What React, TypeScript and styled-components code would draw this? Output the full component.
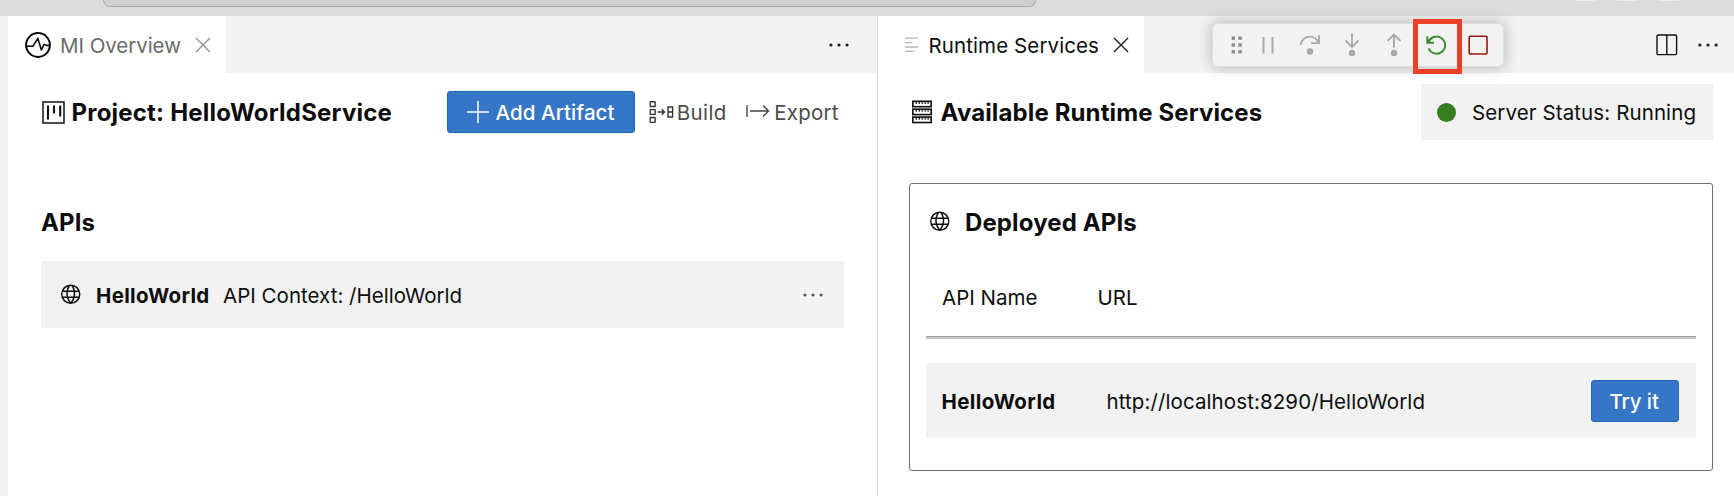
import React from 'react';
import styled, { createGlobalStyle } from 'styled-components';
import { VscGlobe } from 'react-icons/vsc';

const GlobalStyle = createGlobalStyle`
  *, *::before, *::after { box-sizing: border-box; }
  body { margin: 0; background: #fff; font-family: Inter, "Liberation Sans", sans-serif; color: #0d0d0d; overflow: hidden; }
  svg { display: block; flex: none; }
`;

const Window = styled.div`
  position: relative;
  display: flex;
  flex-direction: column;
  width: 1734px;
  height: 496px;
`;

const TitleBar = styled.div`
  display: flex;
  height: 16px;
  padding-left: 103px;
  background: #dcdcdc;
`;

const CommandCenter = styled.div`
  width: 933px;
  height: 7px;
  border: solid #a9a9a9;
  border-width: 0 1px 1px;
  border-radius: 0 0 8px 8px;
  background: #d0d0d0;
`;

const LayoutToggles = styled.div`
  display: flex;
  gap: 22px;
  margin-left: 539px;
`;

const Toggle = styled.span`
  width: 20px;
  height: 1px;
  background: #ececec;
`;

const Workbench = styled.div`
  display: flex;
  flex: 1;
  border-left: 8px solid #f2f2f2;
`;

const Pane = styled.section<{ $width: number; $divided?: boolean }>`
  display: flex;
  flex-direction: column;
  width: ${p => p.$width}px;
  border-right: ${p => (p.$divided ? '1px solid #dcdcdc' : '0')};
`;

const TabBar = styled.div`
  display: flex;
  align-items: center;
  justify-content: space-between;
  height: 57px;
  background: #f2f2f2;
`;

const Tab = styled.div<{ $width: number; $pad: number }>`
  display: flex;
  align-items: center;
  width: ${p => p.$width}px;
  height: 57px;
  padding-left: ${p => p.$pad}px;
  background: #fff;
`;

const TabActions = styled.div<{ $right: number }>`
  display: flex;
  align-items: center;
  gap: 18px;
  padding-right: ${p => p.$right}px;
`;

const Text = styled.span<{ $ls?: number; $ml?: number; $w?: number; $color?: string; $weight?: number }>`
  margin-left: ${p => p.$ml ?? 0}px;
  width: ${p => (p.$w ? `${p.$w}px` : 'auto')};
  flex: none;
  white-space: nowrap;
  font-size: 20.5px;
  line-height: 28px;
  font-weight: ${p => p.$weight ?? 400};
  letter-spacing: ${p => p.$ls ?? 0}px;
  color: ${p => p.$color ?? 'inherit'};
  transform: translateY(1px);
`;

const Heading = styled.h2<{ $ls?: number; $ml?: number; $w?: number }>`
  margin: 0 0 0 ${p => p.$ml ?? 0}px;
  width: ${p => (p.$w ? `${p.$w}px` : 'auto')};
  white-space: nowrap;
  font-size: 24px;
  line-height: 32px;
  font-weight: 700;
  letter-spacing: ${p => p.$ls ?? 0.12}px;
  transform: translateY(1px);
`;

const Header = styled.header<{ $left: number }>`
  display: flex;
  align-items: center;
  height: 56px;
  margin-top: 11px;
  padding-left: ${p => p.$left}px;
`;

const PrimaryButton = styled.button<{ $width: number; $pad: number }>`
  display: flex;
  align-items: center;
  flex: none;
  width: ${p => p.$width}px;
  height: 42px;
  padding: 0 0 0 ${p => p.$pad}px;
  border: 1px solid #1c68c0;
  border-radius: 3px;
  background: #3577c6;
  color: #fff;
  font-family: inherit;
`;

const LinkButton = styled.div<{ $ml: number }>`
  display: flex;
  align-items: center;
  margin-left: ${p => p.$ml}px;
  color: #4b4b4b;
`;

const SectionTitle = styled.div`
  display: flex;
  align-items: center;
  height: 32px;
  margin: 66px 0 0 33px;
`;

const ArtifactRow = styled.div`
  display: flex;
  align-items: center;
  width: 803px;
  height: 67px;
  margin: 23px 0 0 33px;
  padding: 0 19px 0 17px;
  background: #f2f2f2;

  > :last-child { margin-left: auto; }
`;

const ServerStatus = styled.div`
  display: flex;
  align-items: center;
  width: 292px;
  height: 56px;
  margin-left: auto;
  margin-right: 21px;
  padding-left: 16px;
  background: #f2f2f2;
`;

const StatusDot = styled.span`
  width: 19px;
  height: 19px;
  border-radius: 50%;
  background: #357f20;
`;

const Card = styled.div`
  width: 804px;
  height: 288px;
  margin: 43px 0 0 31px;
  padding: 22px 16px 0;
  border: 1px solid #6f6f6f;
  border-radius: 3px;
`;

const CardTitle = styled.div`
  display: flex;
  align-items: center;
  padding-left: 1px;
`;

const TableHead = styled.div`
  display: flex;
  align-items: center;
  height: 28px;
  margin-top: 45px;
  padding-left: 16px;
`;

const Rule = styled.div`
  height: 3px;
  margin-top: 25px;
  border-top: 1px solid #9f9f9f;
  border-bottom: 2px solid #c6c6c6;
`;

const ServiceRow = styled.div`
  display: flex;
  align-items: center;
  height: 75px;
  margin-top: 24px;
  padding: 0 17px 0 15.5px;
  background: #f2f2f2;

  > button { margin-left: auto; }
`;

const DebugToolbar = styled.div`
  position: absolute;
  left: 1212px;
  top: 23px;
  display: flex;
  align-items: center;
  width: 292px;
  height: 44px;
  padding-left: 12px;
  border: 1px solid #dedede;
  border-radius: 6px;
  background: #f2f2f2;
  box-shadow: 0 0 13px 2px rgba(0, 0, 0, 0.2);
`;

const DebugAction = styled.span<{ $width?: number; $color?: string }>`
  display: flex;
  justify-content: center;
  flex: none;
  width: ${p => p.$width ?? 42}px;
  color: ${p => p.$color ?? '#a9a9a9'};
`;

const Highlight = styled.div`
  position: absolute;
  left: 1413px;
  top: 19px;
  width: 49px;
  height: 55px;
  border: 5px solid #ea4025;
`;

type IconProps = { w?: number; h?: number; stroke?: number; color?: string; children: React.ReactNode };
const Icon = ({ w = 24, h = 24, stroke = 1.5, color = 'currentColor', children }: IconProps) => (
  <svg width={w} height={h} viewBox={`0 0 ${w} ${h}`} fill="none" stroke={color} strokeWidth={stroke}>
    {children}
  </svg>
);

const MoreIcon = ({ color = '#1f1f1f' }) => (
  <Icon color="none">
    {[3.9, 12, 20.1].map(x => <circle key={x} cx={x} cy="12" r="1.6" fill={color} />)}
  </Icon>
);

const CloseIcon = ({ color }: { color: string }) => (
  <Icon w={16} h={16} stroke={1.4} color={color}><path d="M1 1 15 15M15 1 1 15" /></Icon>
);

const PulseIcon = () => (
  <Icon w={28} h={28} stroke={2} color="#080808">
    <circle cx="14" cy="14" r="11.9" />
    <path strokeWidth="1.6" strokeLinejoin="round" d="M2.5 15.3H8.8L13.8 7.3 17.4 19 20 13.4 22 14.4H25.5" />
  </Icon>
);

const ProjectIcon = () => (
  <Icon w={23} h={23} stroke={1.5} color="#111">
    <rect x="1" y="1" width="21" height="21" />
    <path strokeWidth="2.1" d="M6 4.5V18.5M12 4.5V12.5M18.2 4.5V15.5" />
  </Icon>
);

const PlusIcon = () => (
  <Icon w={22} h={22} stroke={1.5}><path d="M11 0V22M0 11H22" /></Icon>
);

const BuildIcon = () => (
  <Icon w={26} h={24} stroke={1.35} color="#333">
    <rect x="1.2" y="1.7" width="5" height="4.8" rx=".5" />
    <rect x="1.2" y="9.6" width="5" height="4.8" rx=".5" />
    <rect x="1.2" y="17.5" width="5" height="4.8" rx=".5" />
    <path d="M8.5 12H15.5M12.8 9.2 15.6 12 12.8 14.8" />
    <path d="M19 7H23.6V17H19ZM19 12H23.6" />
  </Icon>
);

const ExportIcon = () => (
  <Icon w={24} h={24} stroke={1.4} color="#444">
    <path d="M1 5.2V17M4 11H22.5M17 5.5 22.5 11 17 16.5" />
  </Icon>
);

const FileLinesIcon = () => (
  <Icon w={14} h={16} stroke={1.3} color="#b5b5b5">
    <path d="M0 1.2H13M0 5.7H7.5M0 10H13M0 14.3H9.5" />
  </Icon>
);

const ServerIcon = () => (
  <Icon w={20} h={24} stroke={1.6} color="#0d0d0d">
    {[1.3, 9.2, 17.1].map(y => (
      <g key={y}>
        <rect x=".8" y={y} width="18.4" height="5.4" />
        <path strokeWidth="1.2" d={`M4.2 ${y}v2.6M7.2 ${y}v2.6M10.2 ${y}v2.6M13.2 ${y}v2.6M16.1 ${y}v2.6`} />
      </g>
    ))}
  </Icon>
);

const SplitIcon = () => (
  <Icon w={22} h={22} stroke={1.4} color="#111">
    <rect x="1" y="1" width="19.6" height="19.6" rx="1.2" />
    <path d="M10.8 1V20.6" />
  </Icon>
);

export default function App() {
  return (
    <>
      <GlobalStyle />
      <Window>
        <TitleBar>
          <CommandCenter />
          <LayoutToggles><Toggle /><Toggle /><Toggle /></LayoutToggles>
        </TitleBar>
        <Workbench>
          <Pane $width={870} $divided>
            <TabBar>
              <Tab $width={218} $pad={15.5}>
                <PulseIcon />
                <Text $ml={8.5} $w={134.5} $ls={-0.05} $color="#6a6a6a">MI Overview</Text>
                <CloseIcon color="#929292" />
              </Tab>
              <TabActions $right={26}><MoreIcon /></TabActions>
            </TabBar>
            <Header $left={33.5}>
              <ProjectIcon />
              <Heading $ml={7} $w={375.5} $ls={0.2}>Project: HelloWorldService</Heading>
              <PrimaryButton $width={188} $pad={19}>
                <PlusIcon />
                <Text $ml={6.5} $ls={0.09} $weight={500}>Add Artifact</Text>
              </PrimaryButton>
              <LinkButton $ml={13.5}><BuildIcon /><Text $ml={2.2} $ls={0.4}>Build</Text></LinkButton>
              <LinkButton $ml={19}><ExportIcon /><Text $ml={4.5} $ls={0.25}>Export</Text></LinkButton>
            </Header>
            <SectionTitle><Heading>APIs</Heading></SectionTitle>
            <ArtifactRow>
              <VscGlobe size={24} />
              <Text $ml={14} $w={127} $ls={0.34} $weight={700}>HelloWorld</Text>
              <Text $ls={0.02}>API Context: /HelloWorld</Text>
              <MoreIcon color="#555" />
            </ArtifactRow>
          </Pane>
          <Pane $width={856}>
            <TabBar>
              <Tab $width={266} $pad={27}>
                <FileLinesIcon />
                <Text $ml={9.5} $w={184.5} $ls={0.1}>Runtime Services</Text>
                <CloseIcon color="#1f1f1f" />
              </Tab>
              <TabActions $right={14}><SplitIcon /><MoreIcon /></TabActions>
            </TabBar>
            <Header $left={34}>
              <ServerIcon />
              <Heading $ml={8.5} $ls={0.12}>Available Runtime Services</Heading>
              <ServerStatus>
                <StatusDot />
                <Text $ml={16} $ls={0.11}>Server Status: Running</Text>
              </ServerStatus>
            </Header>
            <Card>
              <CardTitle>
                <VscGlobe size={24} />
                <Heading $ml={14}>Deployed APIs</Heading>
              </CardTitle>
              <TableHead>
                <Text $w={155.5}>API Name</Text>
                <Text>URL</Text>
              </TableHead>
              <Rule />
              <ServiceRow>
                <Text $w={165} $ls={0.4} $weight={700}>HelloWorld</Text>
                <Text $ls={0.1}>http://localhost:8290/HelloWorld</Text>
                <PrimaryButton $width={88} $pad={17.5}>
                  <Text $ls={-0.1} $weight={500}>Try it</Text>
                </PrimaryButton>
              </ServiceRow>
            </Card>
          </Pane>
        </Workbench>
        <DebugToolbar>
          <DebugAction $width={22} $color="#8c8c8c">
            <Icon color="none">
              {[3.5, 10.3, 17.1].map(y => (
                <g key={y} fill="currentColor">
                  <rect x="7.6" y={y} width="3.4" height="3.4" />
                  <rect x="14.4" y={y} width="3.4" height="3.4" />
                </g>
              ))}
            </Icon>
          </DebugAction>
          <DebugAction><Icon stroke={2}><path d="M7.5 4V20.5M16.5 4V20.5" /></Icon></DebugAction>
          <DebugAction>
            <Icon stroke={1.9}>
              <path d="M2.6 11.8C3.4 6.6 7.5 3.6 12 3.6C15.5 3.6 18.5 5.5 20.4 9.6M21 2.3V10.1H13.2" />
              <circle cx="12" cy="18.5" r="3.2" fill="currentColor" stroke="none" />
            </Icon>
          </DebugAction>
          <DebugAction>
            <Icon stroke={1.9}>
              <path d="M12 .5V13.5M5.5 7.3 12 13.8 18.5 7.3" />
              <circle cx="12" cy="20" r="3.2" fill="currentColor" stroke="none" />
            </Icon>
          </DebugAction>
          <DebugAction>
            <Icon stroke={1.9}>
              <path d="M12 1.5V14.5M5.5 8 12 1.5 18.5 8" />
              <circle cx="12" cy="20" r="3.2" fill="currentColor" stroke="none" />
            </Icon>
          </DebugAction>
          <DebugAction $color="#388a2c">
            <Icon stroke={1.9}>
              <path d="M4.6 15.4A8.6 8.6 0 1 0 4.3 9.6M3.3 3.2V9.7H10" />
            </Icon>
          </DebugAction>
          <DebugAction $color="#96180c">
            <Icon stroke={1.6}><rect x="3.2" y="3.2" width="17.8" height="17.8" rx="1" /></Icon>
          </DebugAction>
        </DebugToolbar>
        <Highlight />
      </Window>
    </>
  );
}
